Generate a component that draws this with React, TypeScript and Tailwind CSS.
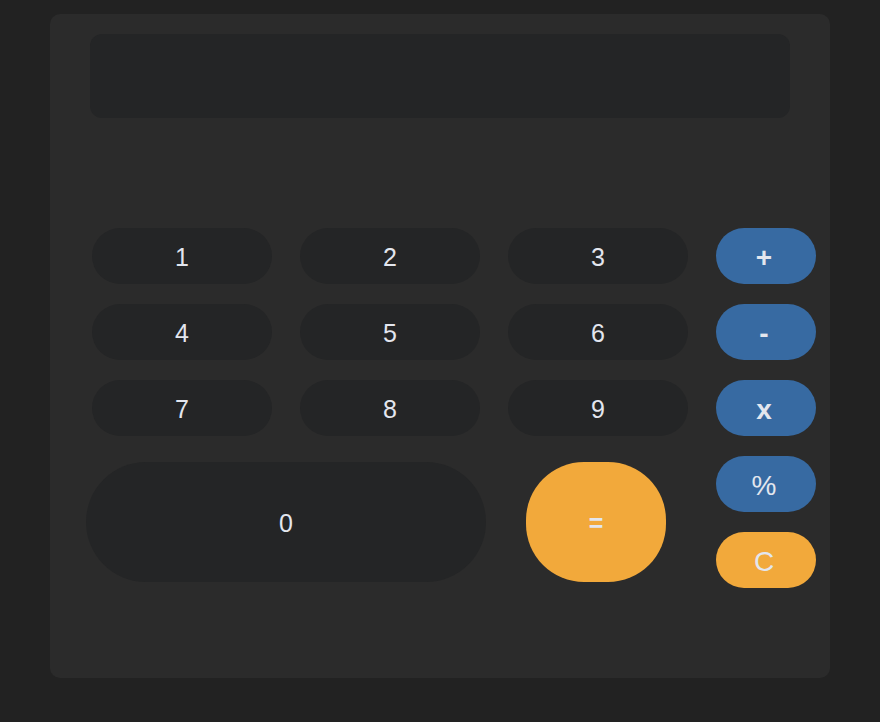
// Calculator screen: display on top, keypad below
const digitRows = [
  ['1', '2', '3'],
  ['4', '5', '6'],
  ['7', '8', '9'],
]

const ops = [
  { label: '+', cls: 'bg-[#376aa2] font-bold' },
  { label: '-', cls: 'bg-[#376aa2] font-bold' },
  { label: 'x', cls: 'bg-[#376aa2] font-bold' },
  { label: '%', cls: 'bg-[#376aa2]' },
  { label: 'C', cls: 'bg-[#f2a93b]' },
]

export default function App() {
  return (
    <div className="min-h-[722px] bg-[#222222] pt-[14px] font-['Liberation_Sans',Arial,sans-serif] text-[#e3e6ee]">
      <div className="mx-[50px] h-[664px] rounded-[10px] bg-[#2b2b2b] px-[40px] pt-[20px]">
        {/* display */}
        <div className="h-[84px] rounded-[12px] bg-[#242526]" />

        {/* keypad */}
        <div className="mt-[110px] -ml-[4px] flex gap-[22px]">
          <div className="flex w-[608px] flex-col">
            {digitRows.map((row, i) => (
              <div key={i} className="mb-[20px] flex gap-[28px] pl-[6px]">
                {row.map(d => (
                  <button
                    key={d}
                    className="flex h-[56px] w-[180px] items-center justify-center rounded-full bg-[#242526] pt-[3px] text-[25px]"
                  >
                    {d}
                  </button>
                ))}
              </div>
            ))}
            <div className="mt-[6px] flex gap-[40px]">
              <button className="flex h-[120px] w-[400px] items-center justify-center rounded-full bg-[#242526] pt-[3px] text-[25px]">
                0
              </button>
              <button className="flex h-[120px] w-[140px] items-center justify-center rounded-[58px] bg-[#f2a93b] pt-[3px] text-[25px] font-bold">
                =
              </button>
            </div>
          </div>

          <div className="ml-[6px] flex flex-col gap-[20px]">
            {ops.map(o => (
              <button
                key={o.label}
                className={`flex h-[56px] w-[100px] items-center justify-center rounded-full pt-[3px] pr-[4px] text-[28px] ${o.cls}`}
              >
                {o.label}
              </button>
            ))}
          </div>
        </div>
      </div>
    </div>
  )
}
